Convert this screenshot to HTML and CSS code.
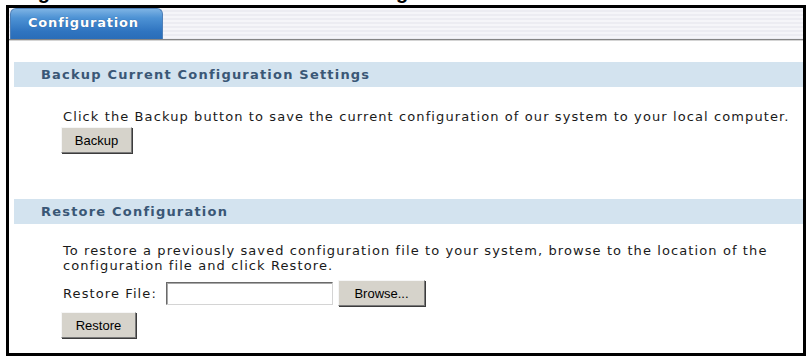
FILE: index.html
```html
<!DOCTYPE html>
<html>
<head>
<meta charset="utf-8">
<link rel="stylesheet" href="styles.css">
</head>
<body>
<div class="caption"><div class="caption-line"><span class="cap-a">Figure 95&nbsp;&nbsp; Maintenance &gt;</span><span class="cap-b">Configuration</span></div></div>
<div class="frame">
  <div class="tabbar">
    <div class="tab">Configuration</div>
  </div>
  <div class="band band-first">Backup Current Configuration Settings</div>
  <div class="content">
    <p class="text text-first">Click the Backup button to save the current configuration of our system to your local computer.</p>
    <button class="btn btn-backup">Backup</button>
  </div>
  <div class="band band-second">Restore Configuration</div>
  <div class="content">
    <p class="text text-second">To restore a previously saved configuration file to your system, browse to the location of the configuration file and click Restore.</p>
    <div class="filerow">
      <span class="label">Restore File:</span>
      <span class="input"></span>
      <button class="btn btn-browse">Browse...</button>
    </div>
    <button class="btn btn-restore">Restore</button>
  </div>
</div>
</body>
</html>
```

FILE: styles.css
```css
html, body {
  margin: 0;
  padding: 0;
  background: #fff;
}
body {
  width: 806px;
  height: 359px;
  overflow: hidden;
}
.caption {
  height: 5px;
  overflow: hidden;
}
.caption-line {
  display: flex;
  margin-top: -18px;
  padding-left: 20px;
  font-family: "Liberation Sans", Arial, sans-serif;
  font-weight: bold;
  font-size: 20px;
  line-height: 20px;
  color: #000;
  white-space: nowrap;
}
.cap-b {
  margin-left: auto;
  margin-right: 330px;
}
.frame {
  margin-left: 6px;
  width: 794px;
  height: 345px;
  border: 3px solid #000;
  box-sizing: content-box;
  font-family: "DejaVu Sans", Verdana, sans-serif;
}
.tabbar {
  height: 31px;
  padding-left: 1px;
  background: repeating-linear-gradient(to bottom, #f5f5f9 0px, #f5f5f9 2px, #ececf2 2px, #ececf2 4px);
  border-bottom: 1px solid #858585;
  box-shadow: 0 1px 0 #d4d4d4;
  display: flex;
  align-items: flex-end;
}
.tab {
  width: 153px;
  height: 31px;
  border-radius: 6px 6px 0 0;
  background: linear-gradient(to bottom, #7db3e4 0%, #4d92d4 30%, #2f74c0 75%, #2a6db8 100%);
  border: 1px solid #4f80b8;
  border-bottom: none;
  box-sizing: border-box;
  color: #fff;
  font-weight: bold;
  font-size: 13px;
  line-height: 28px;
  padding-left: 17px;
  letter-spacing: 0.8px;
  text-shadow: 0 0 1px #1d4f8a;
}
.band {
  margin: 0 0 0 5px;
  height: 25px;
  background: #d3e3ef;
  color: #3a5776;
  font-weight: bold;
  font-size: 13px;
  line-height: 25px;
  padding-left: 27px;
  letter-spacing: 1.2px;
}
.band-first {
  margin-top: 22px;
}
.band-second {
  margin-top: 46px;
}
.content {
  padding-left: 54px;
}
.text {
  margin: 0;
  font-size: 13px;
  line-height: 15px;
  color: #1a1a1a;
  letter-spacing: 1.1px;
}
.text-first {
  padding-top: 22px;
  width: 740px;
}
.text-second {
  padding-top: 19px;
  width: 720px;
}
.btn {
  display: block;
  font-family: "Liberation Sans", Arial, sans-serif;
  font-size: 13px;
  color: #000;
  background: #d6d3cb;
  border: 1px solid;
  border-color: #f6f6f6 #7a7a7a #7a7a7a #f6f6f6;
  box-shadow: 1px 1px 0 #3c3c3c;
  padding: 0;
  height: 26px;
}
.btn-backup {
  margin-top: 3px;
  margin-left: -2px;
  width: 71px;
}
.filerow {
  display: flex;
  align-items: center;
  margin-top: 7px;
  height: 26px;
}
.label {
  font-size: 13px;
  letter-spacing: 1.1px;
  color: #1a1a1a;
  width: 103px;
}
.input {
  width: 167px;
  height: 23px;
  border: 1px solid;
  border-color: #6a6a6a #d4d4d4 #d4d4d4 #6a6a6a;
  box-shadow: inset 1px 1px 0 #a8a8a8;
  box-sizing: border-box;
  background: #fff;
}
.btn-browse {
  margin-left: 5px;
  width: 87px;
}
.btn-restore {
  margin-top: 6px;
  margin-left: -2px;
  width: 75px;
}
```
